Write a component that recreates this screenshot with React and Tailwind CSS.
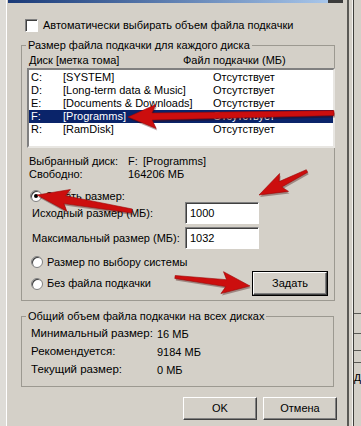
import React from "react";

const font = "font-['Liberation_Sans',Arial,sans-serif]";

function arrowPts(x1, y1, x2, y2, hl, hw, s0, s1) {
  const len = Math.hypot(x2 - x1, y2 - y1);
  const ux = (x2 - x1) / len;
  const uy = (y2 - y1) / len;
  const px = -uy;
  const py = ux;
  const bx = x2 - ux * hl;
  const by = y2 - uy * hl;
  const nx = bx - ux * 4;
  const ny = by - uy * 4;
  const pts = [
    [x1 + (px * s0) / 2, y1 + (py * s0) / 2],
    [bx + (px * s1) / 2, by + (py * s1) / 2],
    [nx + (px * hw) / 2, ny + (py * hw) / 2],
    [x2, y2],
    [nx - (px * hw) / 2, ny - (py * hw) / 2],
    [bx - (px * s1) / 2, by - (py * s1) / 2],
    [x1 - (px * s0) / 2, y1 - (py * s0) / 2],
  ];
  return pts.map((p) => p[0].toFixed(1) + "," + p[1].toFixed(1)).join(" ");
}

const arrows = [
  [334, 113, 128, 117, 24, 24, 5, 7],
  [132, 211, 37, 195, 28, 22, 4, 8],
  [307, 171, 259, 195, 24, 20, 3, 6],
  [175, 277, 250, 286, 24, 22, 3, 7],
];

const Arrows = () => (
  <svg className="absolute inset-0 pointer-events-none" width="361" height="426">
    {arrows.map((a, i) => (
      <g key={i}>
        <polygon points={arrowPts(a[0] + 1, a[1] + 2, a[2] + 1, a[3] + 2, a[4], a[5], a[6], a[7])} fill="#3a0000" opacity="0.35" />
        <polygon points={arrowPts(...a)} fill="#cc0e0e" stroke="#9a0505" strokeWidth="0.6" />
      </g>
    ))}
  </svg>
);

const Radio = ({ checked }) => (
  <span className="w-[12px] h-[12px] rounded-full bg-white border border-[#808080] shadow-[inset_1px_1px_0_#404040] flex items-center justify-center shrink-0">
    {checked && <span className="w-[4px] h-[4px] rounded-full bg-black" />}
  </span>
);

const Input = ({ value }) => (
  <div className="w-[74px] h-[22px] shrink-0 bg-white border border-t-[#808080] border-l-[#808080] border-r-white border-b-white shadow-[inset_1px_1px_0_#404040] flex items-center pl-[4px]">
    {value}
  </div>
);

const Button = ({ children }) => (
  <div className="w-[74px] h-[23px] border border-t-white border-l-white border-r-[#404040] border-b-[#404040] shadow-[inset_-1px_-1px_0_#808080] flex items-center justify-center">
    {children}
  </div>
);

const drives = [
  ["C:", "[SYSTEM]", "Отсутствует"],
  ["D:", "[Long-term data & Music]", "Отсутствует"],
  ["E:", "[Documents & Downloads]", "Отсутствует"],
  ["F:", "[Programms]", "Отсутствует"],
  ["R:", "[RamDisk]", "Отсутствует"],
];

export default function App() {
  return (
    <div className={`relative w-[361px] h-[426px] overflow-hidden flex bg-[#d4d0c8] text-black text-[11px] leading-none whitespace-nowrap ${font}`}>
      <div className="w-[7px] bg-[#dedcd7] border-r border-white" />

      <div className="w-[340px] flex flex-col">
        <div className="h-[3px] flex">
          <div className="w-[1px]" />
          <div className="w-[320px] bg-gradient-to-r from-[#1a3a78] to-[#a8c6ea]" />
          <div className="w-[15px] bg-[#3b3b3b]" />
        </div>

        <div className="mt-[15px] h-[14px] flex items-center pl-[18px]">
          <span className="w-[13px] h-[13px] bg-white border border-t-[#808080] border-l-[#808080] border-r-white border-b-white shadow-[inset_1px_1px_0_#404040]" />
          <span className="ml-[5px]">Автоматически выбирать объем файла подкачки</span>
        </div>

        <fieldset className="mt-[6px] ml-[14px] w-[313px] border border-[#9c9991] pb-[5px]">
          <legend className="ml-[4px] px-[2px] h-[14px] leading-[14px]">Размер файла подкачки для каждого диска</legend>
          <div className="h-[16px] flex items-center pl-[7px]">
            <span className="w-[154px] shrink-0">Диск [метка тома]</span>
            <span>Файл подкачки (МБ)</span>
          </div>
          <div className="ml-[5px] -mr-[1px] w-[308px] h-[80px] bg-white border-2 border-t-[#808080] border-l-[#808080] border-r-[#e8e6e2] border-b-[#e8e6e2] pt-[1px]">
            {drives.map((d) => {
              const sel = d[0] === "F:";
              return (
                <div key={d[0]} className={`h-[13px] flex items-center pl-[2px] ${sel ? "bg-[#0a246a] text-white" : ""}`}>
                  <span className="w-[32px] shrink-0">{d[0]}</span>
                  <span className="w-[150px] shrink-0">{d[1]}</span>
                  <span>{d[2]}</span>
                </div>
              );
            })}
          </div>

          <div className="mt-[7px] pl-[7px]">
            <div className="h-[13px] flex items-center">
              <span className="w-[99px] shrink-0">Выбранный диск:</span>
              <span className="w-[15px] shrink-0">F:</span>
              <span>[Programms]</span>
            </div>
            <div className="h-[13px] flex items-center">
              <span className="w-[99px] shrink-0">Свободно:</span>
              <span>164206 МБ</span>
            </div>
          </div>

          <div className="mt-[9px] h-[12px] flex items-center pl-[8px] gap-[4px]">
            <Radio checked />
            <span>Задать размер:</span>
          </div>

          <div className="h-[22px] flex items-center pl-[10px]">
            <span className="w-[153px] shrink-0">Исходный размер (МБ):</span>
            <Input value="1000" />
          </div>
          <div className="mt-[3px] h-[22px] flex items-center pl-[10px]">
            <span className="w-[153px] shrink-0">Максимальный размер (МБ):</span>
            <Input value="1032" />
          </div>

          <div className="mt-[7px] h-[12px] flex items-center pl-[9px] gap-[4px]">
            <Radio />
            <span>Размер по выбору системы</span>
          </div>
          <div className="mt-[4px] h-[23px] flex items-center justify-between pl-[9px] pr-[6px]">
            <div className="flex items-center gap-[4px]">
              <Radio />
              <span>Без файла подкачки</span>
            </div>
            <div className="border border-black">
              <Button>Задать</Button>
            </div>
          </div>
        </fieldset>

        <fieldset className="mt-[8px] ml-[14px] w-[313px] border border-[#9c9991] pb-[7px]">
          <legend className="ml-[4px] px-[2px] h-[14px] leading-[14px]">Общий объем файла подкачки на всех дисках</legend>
          <div className="mt-[2px] pl-[9px]">
            {[
              ["Минимальный размер:", "16 МБ"],
              ["Рекомендуется:", "9184 МБ"],
              ["Текущий размер:", "0 МБ"],
            ].map((r) => (
              <div key={r[0]} className="h-[18px] flex items-center">
                <span className="w-[126px] shrink-0 text-[11.5px]">{r[0]}</span>
                <span>{r[1]}</span>
              </div>
            ))}
          </div>
        </fieldset>

        <div className="mt-[10px] flex justify-end gap-[6px] pr-[10px]">
          <Button>OK</Button>
          <Button>Отмена</Button>
        </div>
      </div>

      <div className="w-[14px] flex">
        <div className="w-[2px] bg-[#5a5955]" />
        <div className="w-[6px] bg-[#d4d0c8] border-r border-[#f4f3f0]" />
        <div className="w-[1px] bg-[#3f3e3b]" />
        <div className="flex-1 flex flex-col bg-[#d4d0c8]">
          <div className="h-[313px]" />
          <div className="h-[20px] border-t border-[#5a5955]" />
          <div className="h-[17px] border-t border-[#5a5955]" />
          <div className="h-[12px] border-t border-[#5a5955]" />
          <div className="border-t border-[#5a5955] pt-[8px] text-[12px]">д</div>
        </div>
      </div>

      <Arrows />
    </div>
  );
}
